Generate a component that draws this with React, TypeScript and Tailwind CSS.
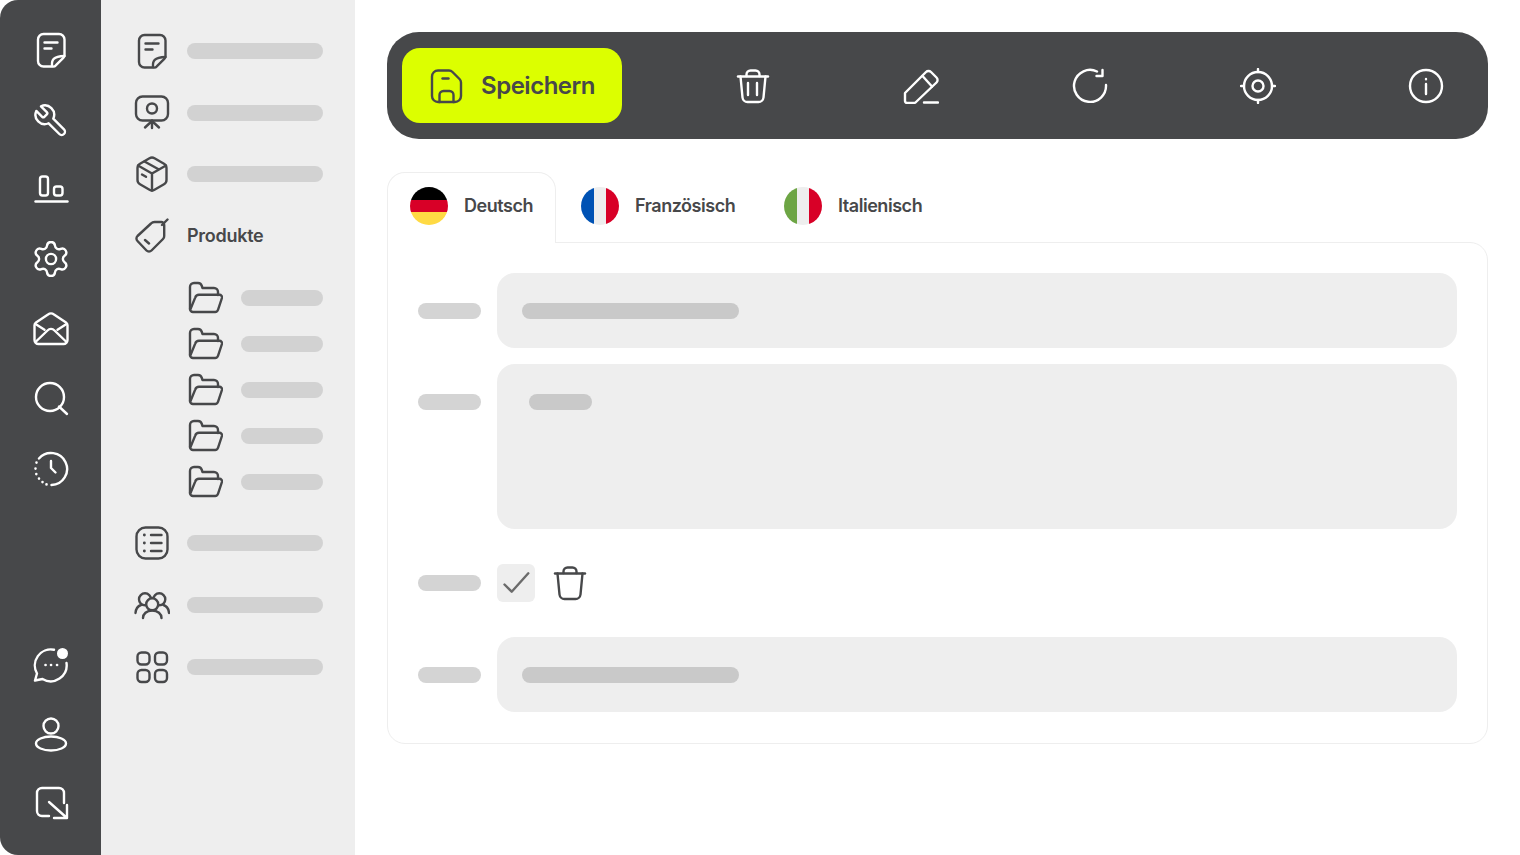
import type { ReactNode } from "react";

const Ic = ({ children, size = 36 }: { children: ReactNode; size?: number }) => (
  <svg
    width={size}
    height={size}
    viewBox="0 0 36 36"
    fill="none"
    stroke="currentColor"
    strokeWidth={2.4}
    strokeLinecap="round"
    strokeLinejoin="round"
    className="shrink-0"
  >
    {children}
  </svg>
);

const NoteIcon = () => (
  <Ic>
    <path d="M19 34.500H10.500A5.500 5.500 0 0 1 5 29V7.500A5.500 5.500 0 0 1 10.500 2H26a5.500 5.500 0 0 1 5.500 5.500V23a4 4 0 0 1-1.200 2.800L23 33.200a4 4 0 0 1-4 1.300Z" />
    <path d="M19 34c-.5-6 1-9.500 12.500-10" />
    <path d="M11.500 10.500h13M11.500 16.500h7" />
  </Ic>
);

const WrenchIcon = () => (
  <Ic>
    <g transform="translate(18 19) scale(-1.55 1.55) translate(-12 -12)" strokeWidth={1.55}>
      <path d="M14.700 6.300a1 1 0 0 0 0 1.400l1.600 1.600a1 1 0 0 0 1.400 0l3.770-3.770a6 6 0 0 1-7.940 7.940l-6.910 6.910a2.120 2.120 0 0 1-3-3l6.910-6.910a6 6 0 0 1 7.940-7.940l-3.760 3.760z" />
    </g>
  </Ic>
);

const AlignIcon = () => (
  <Ic>
    <rect x="7" y="5.500" width="8" height="19" rx="2.500" />
    <rect x="21" y="15.500" width="8.500" height="9" rx="2.500" />
    <path d="M2.500 30.500h32" />
  </Ic>
);

const GearIcon = () => (
  <Ic>
    <g transform="translate(18 18) scale(1.7) translate(-12 -12)" strokeWidth={1.4}>
      <path d="M9.671 4.136a2.34 2.34 0 0 1 4.659 0 2.34 2.34 0 0 0 3.319 1.915 2.34 2.34 0 0 1 2.33 4.033 2.34 2.34 0 0 0 0 3.831 2.34 2.34 0 0 1-2.33 4.033 2.34 2.34 0 0 0-3.319 1.915 2.34 2.34 0 0 1-4.659 0 2.34 2.34 0 0 0-3.319-1.915 2.34 2.34 0 0 1-2.33-4.033 2.34 2.34 0 0 0 0-3.831A2.34 2.34 0 0 1 6.35 6.051a2.34 2.34 0 0 0 3.319-1.915" />
      <circle cx="12" cy="12" r="3" />
    </g>
  </Ic>
);

const MailIcon = () => (
  <Ic>
    <path d="M3 11.500 15 3.500a5 5 0 0 1 6 0l12 8a3.500 3.500 0 0 1 1.500 3V29a4 4 0 0 1-4 4h-25a4 4 0 0 1-4-4V14.500a3.500 3.500 0 0 1 1.500-3Z" />
    <path d="m2.500 13 9 5.800M33.500 13l-9 5.800" />
    <path d="M3 30.500 14.500 19.500a5 5 0 0 1 7 0L33 30.500" />
  </Ic>
);

const SearchIcon = () => (
  <Ic>
    <circle cx="17" cy="16" r="14" />
    <path d="m26 25.500 8 7.500" />
  </Ic>
);

const ClockIcon = () => (
  <Ic>
    <path d="M6 7.500A16 16 0 1 1 18.500 34" />
    <path d="M2.500 17.500v.1M3.300 23v.1M6 27.500v.1M9.500 31v.1M13.500 33.300v.1M3.500 11.500v.1" strokeWidth={2.6} />
    <path d="M18 10v7l4.500 4.500" />
  </Ic>
);

const ChatIcon = () => (
  <Ic>
    <path d="M21 2.800A16 16 0 0 0 4 26.500L2 33.500l7.500-1.500A16 16 0 0 0 33.500 16" />
    <path d="M12.500 18h.1M18 18h.1M24 18h.1" strokeWidth={2.6} />
    <circle cx="29.500" cy="6.500" r="5.500" fill="currentColor" stroke="none" />
  </Ic>
);

const UserIcon = () => (
  <Ic>
    <circle cx="18" cy="10" r="7.500" />
    <path d="M3 27.500C3 23.500 10 20.500 18 20.500S33 23.500 33 27.500 26 34.500 18 34.500 3 31.500 3 27.500Z" />
  </Ic>
);

const ExitIcon = () => (
  <Ic>
    <path d="M31 17V7a5 5 0 0 0-5-5H9a5 5 0 0 0-5 5v18a5 5 0 0 0 5 5h7" />
    <path d="m16 16 18 16M21 32h13V19" />
  </Ic>
);

const ScreenIcon = () => (
  <Ic>
    <rect x="2" y="1.500" width="32" height="24" rx="6.500" />
    <circle cx="18" cy="13.500" r="5" />
    <path d="M18 25.500V33M11 32.500l7-6.500 7 6.500" />
  </Ic>
);

const BoxIcon = () => (
  <Ic>
    <path d="M15.500 2.300a5 5 0 0 1 5 0l9.500 5.500a5 5 0 0 1 2.500 4.300v11.800a5 5 0 0 1-2.500 4.300l-9.500 5.500a5 5 0 0 1-5 0L6 28.200a5 5 0 0 1-2.500-4.300V12.100A5 5 0 0 1 6 7.800Z" />
    <path d="M4 9.500 18 17.500l14-8M18 17.500V34.500M10.500 5.500 25 13.500" />
    <path d="M8 18.500l4 2.300" />
  </Ic>
);

const TagIcon = () => (
  <Ic>
    <path d="M17 5.500 3.500 18a3.500 3.500 0 0 0 0 5l9 9.500a3.500 3.500 0 0 0 5 0L29 21a4 4 0 0 0 1.200-3V7a3 3 0 0 0-3-3H21a5 5 0 0 0-4 1.500Z" />
    <path d="M28 7l5.500-5.500M11 22l4 3.500" />
  </Ic>
);

const FolderIcon = () => (
  <Ic>
    <path d="M3 29V7a4 4 0 0 1 4-4h4a4 4 0 0 1 3.800 3l.7 2H27a4 4 0 0 1 4 4v3" />
    <path d="M3 29a3 3 0 0 0 3 3h22a3 3 0 0 0 3-2.200l4-12a2.500 2.500 0 0 0-2.500-3H12a4 4 0 0 0-3.800 2.800L3.500 29" />
  </Ic>
);

const ListIcon = () => (
  <Ic>
    <rect x="2.500" y="2.500" width="31" height="31" rx="9" />
    <path d="M10.300 10h.1M10.300 18h.1M10.300 26h.1" strokeWidth={2.8} />
    <path d="M17 10h10.500M17 18h10.500M17 26h10.500" />
  </Ic>
);

const UsersIcon = () => (
  <Ic>
    <circle cx="11" cy="12.300" r="6" />
    <circle cx="25.300" cy="12.300" r="6" />
    <circle cx="18.200" cy="17.300" r="6" fill="#eeeeee" />
    <path d="M1.500 26c.3-4 2.200-6.800 5.500-8M35 26c-.3-4-2.200-6.800-5.500-8M9 31c0-4 3.500-7.500 9.200-7.500S27.500 27 27.500 31" />
  </Ic>
);

const GridIcon = () => (
  <Ic>
    <rect x="3.500" y="3.500" width="12" height="12" rx="4" />
    <rect x="21" y="3.500" width="12" height="12" rx="4" />
    <rect x="3.500" y="21" width="12" height="12" rx="4" />
    <rect x="21" y="21" width="12" height="12" rx="4" />
  </Ic>
);

const SaveIcon = () => (
  <Ic>
    <path d="M9 2.500h11a5 5 0 0 1 3.500 1.500l7 7a5 5 0 0 1 1.500 3.500V28a6 6 0 0 1-6 6H9a6 6 0 0 1-6-6V8.500a6 6 0 0 1 6-6Z" />
    <path d="M13.500 10.500h6" />
    <path d="M10.500 34v-7a4 4 0 0 1 4-4h6a4 4 0 0 1 4 4v7" />
  </Ic>
);

const TrashIcon = ({ bars = false }: { bars?: boolean }) => (
  <Ic>
    <path d="M3 8.500h30" />
    <path d="M11.500 8V6.500A4 4 0 0 1 15.500 2.500h5A4 4 0 0 1 24.500 6.500V8" />
    <path d="m5.500 8.500 2 21a5 5 0 0 0 5 4.500h11a5 5 0 0 0 5-4.500l2-21" />
    {bars && <path d="M13 15v12M22 15v12" />}
  </Ic>
);

const PencilIcon = () => (
  <Ic>
    <path d="M2 25 23 4a3.500 3.500 0 0 1 5 0l5.500 5.500a3.500 3.500 0 0 1 0 5L13 34a3 3 0 0 1-2 1H4a2 2 0 0 1-2-2Z" />
    <path d="m19.500 8 9.500 10.500" />
    <path d="M21 34.500h14" />
  </Ic>
);

const RefreshIcon = () => (
  <Ic>
    <path d="M34 17A16 16 0 1 1 25 3.500" />
    <path d="M30.500 2v6h-6" />
  </Ic>
);

const TargetIcon = () => (
  <Ic>
    <circle cx="18" cy="18" r="14" />
    <circle cx="18" cy="18" r="5.500" />
    <path d="M18 1v3M18 32v3M1 18h3M32 18h3" />
  </Ic>
);

const InfoIcon = () => (
  <Ic>
    <circle cx="18" cy="18" r="16" />
    <path d="M18 16v10M18 11v.2" />
  </Ic>
);

const Bar = ({ className }: { className: string }) => (
  <div className={`h-4 rounded-full ${className}`} />
);

const RailItem = ({ children }: { children: ReactNode }) => (
  <div className="flex h-[69.8px] items-center justify-center">{children}</div>
);

const NavItem = ({ icon, label }: { icon: ReactNode; label?: string }) => (
  <div className="flex h-[61.75px] items-center gap-[17px]">
    {icon}
    {label ? (
      <span className="text-lg font-semibold tracking-[-0.015em] text-[#47484a]">{label}</span>
    ) : (
      <Bar className="flex-1 bg-[#d2d2d2]" />
    )}
  </div>
);

const FolderItem = () => (
  <div className="flex h-[46px] items-center gap-[18px] pl-[53px]">
    <FolderIcon />
    <Bar className="flex-1 bg-[#d2d2d2]" />
  </div>
);

const Flag = ({ colors, vertical }: { colors: string[]; vertical?: boolean }) => (
  <div className={`flex size-[38px] shrink-0 overflow-hidden rounded-full ${vertical ? "flex-row" : "flex-col"}`}>
    {colors.map((c) => (
      <div key={c} className={`flex-1 ${c}`} />
    ))}
  </div>
);

const FormRow = ({ children }: { children: ReactNode }) => (
  <div className="flex items-center gap-4">{children}</div>
);

const Label = () => <Bar className="w-[63px] shrink-0 bg-[#d4d4d4]" />;

const Input = () => (
  <div className="flex h-[75px] flex-1 items-center rounded-[18px] bg-[#eeeeee] px-[25px]">
    <Bar className="w-[217px] bg-[#c9c9c9]" />
  </div>
);

const App = () => {
  return (
    <div className="flex h-[855px] w-full overflow-hidden bg-white font-['Inter',sans-serif] text-[#47484a]">
      <aside className="flex w-[101px] shrink-0 flex-col justify-between rounded-l-[18px] bg-[#47484a] pt-[15px] pb-[16px] text-white">
        <div>
          <RailItem><NoteIcon /></RailItem>
          <RailItem><WrenchIcon /></RailItem>
          <RailItem><AlignIcon /></RailItem>
          <RailItem><GearIcon /></RailItem>
          <RailItem><MailIcon /></RailItem>
          <RailItem><SearchIcon /></RailItem>
          <RailItem><ClockIcon /></RailItem>
        </div>
        <div>
          <RailItem><ChatIcon /></RailItem>
          <RailItem><UserIcon /></RailItem>
          <RailItem><ExitIcon /></RailItem>
        </div>
      </aside>

      <nav className="w-[254px] shrink-0 bg-[#eeeeee] pt-[20px] pr-[32px] pl-[33px]">
        <NavItem icon={<NoteIcon />} />
        <NavItem icon={<ScreenIcon />} />
        <NavItem icon={<BoxIcon />} />
        <NavItem icon={<TagIcon />} label="Produkte" />
        <div className="mt-2 mb-[7.5px]">
          <FolderItem />
          <FolderItem />
          <FolderItem />
          <FolderItem />
          <FolderItem />
        </div>
        <NavItem icon={<ListIcon />} />
        <NavItem icon={<UsersIcon />} />
        <NavItem icon={<GridIcon />} />
      </nav>

      <main className="min-w-0 flex-1 pt-8 pr-8 pl-8">
        <div className="flex h-[107px] items-center rounded-[32px] bg-[#47484a] pr-[44px] pl-[15px] text-white">
          <button className="flex h-[75px] w-[220px] items-center gap-[16px] rounded-[18px] bg-[#dcff00] pl-[27px] text-[#47484a]">
            <SaveIcon />
            <span className="text-2xl font-semibold tracking-[-0.02em]">Speichern</span>
          </button>
          <div className="ml-[113px] flex flex-1 items-center justify-between">
            <TrashIcon bars />
            <PencilIcon />
            <RefreshIcon />
            <TargetIcon />
            <InfoIcon />
          </div>
        </div>

        <div className="mt-[33px] flex h-[70px] items-end">
          <div className="relative z-10 -mb-px flex h-[71px] w-[169px] items-center gap-4 rounded-t-[18px] border border-b-0 border-[#eeeeee] bg-white pb-[4px] pl-[22px]">
            <Flag colors={["bg-[#000000]", "bg-[#d80027]", "bg-[#ffda44]"]} />
            <span className="text-lg font-semibold tracking-[-0.025em]">Deutsch</span>
          </div>
          <div className="mb-[2px] flex items-center gap-4 self-center pr-6 pl-[25px]">
            <Flag vertical colors={["bg-[#0052b4]", "bg-[#eeeeee]", "bg-[#d80027]"]} />
            <span className="text-lg font-semibold tracking-[-0.025em]">Französisch</span>
          </div>
          <div className="mb-[2px] flex items-center gap-4 self-center pl-[24.6px]">
            <Flag vertical colors={["bg-[#6da544]", "bg-[#eeeeee]", "bg-[#d80027]"]} />
            <span className="text-lg font-semibold tracking-[-0.025em]">Italienisch</span>
          </div>
        </div>

        <div className="flex h-[502px] flex-col rounded-[18px] rounded-tl-none border border-[#eeeeee] px-[30px] pt-[30px]">
          <FormRow>
            <Label />
            <Input />
          </FormRow>
          <div className="mt-4 flex gap-4">
            <div className="pt-[30px]">
              <Label />
            </div>
            <div className="h-[165px] flex-1 rounded-[18px] bg-[#eeeeee] pt-[30px] pl-[32px]">
              <Bar className="w-[63px] bg-[#c9c9c9]" />
            </div>
          </div>
          <div className="mt-[35px]">
            <FormRow>
              <Label />
              <div className="flex size-[38px] items-center justify-center rounded-[6px] bg-[#eeeeee] text-[#6b6b6b]">
                <svg width="38" height="38" viewBox="0 0 38 38" fill="none" stroke="currentColor" strokeWidth={2.4} strokeLinecap="round" strokeLinejoin="round">
                  <path d="m7.500 20.500 7.200 7.200L31.300 9.300" />
                </svg>
              </div>
              <div className="ml-px">
                <TrashIcon />
              </div>
            </FormRow>
          </div>
          <div className="mt-[35px]">
            <FormRow>
              <Label />
              <Input />
            </FormRow>
          </div>
        </div>
      </main>
    </div>
  );
};

export default App;
